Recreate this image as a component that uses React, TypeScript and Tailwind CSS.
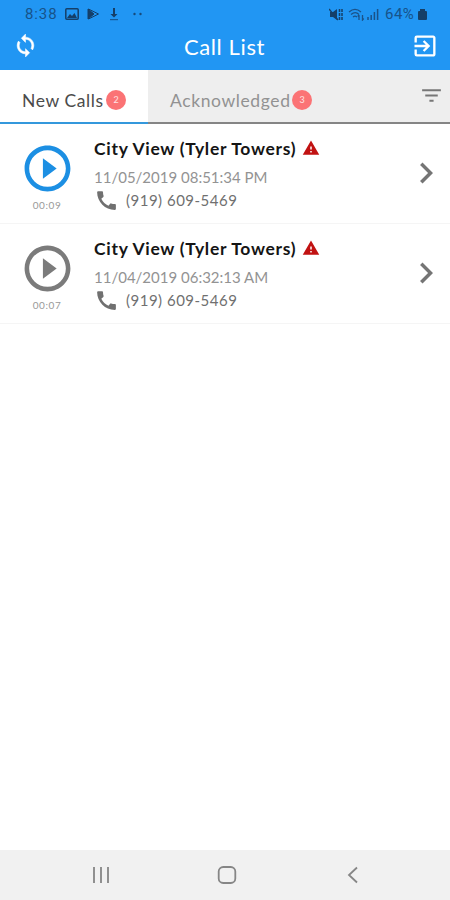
import {
  MdCall,
  MdChevronRight,
  MdExitToApp,
  MdFilterList,
  MdPlayCircleOutline,
  MdWarning,
} from "react-icons/md";

const calls = [
  { name: "City View (Tyler Towers)", date: "11/05/2019 08:51:34 PM", phone: "(919) 609-5469", length: "00:09", unread: true },
  { name: "City View (Tyler Towers)", date: "11/04/2019 06:32:13 AM", phone: "(919) 609-5469", length: "00:07", unread: false },
];

function StatusBar() {
  return (
    <div className="flex h-7 items-center justify-between pl-[25px] pr-[23px] font-['Roboto',sans-serif] text-[15px] text-[#17538a]">
      <div className="flex items-center">
        <span className="w-[33px] tracking-[0.9px]">8:38</span>
        <svg className="ml-[7px]" width="14" height="12" viewBox="0 0 14 12" fill="none" stroke="#153f68" strokeWidth="1.5">
          <rect x="0.8" y="0.8" width="12.4" height="10.4" rx="1" />
          <path d="M2 10l3-4 2 2 2.500-3L12 10z" fill="#153f68" stroke="none" />
        </svg>
        <svg className="ml-2" width="13" height="12" viewBox="0 0 13 12" fill="none" stroke="#153f68">
          <path d="M1.500 1v10L11.500 6z" />
          <path d="M1 1l6 5-6 5z" fill="#153f68" />
        </svg>
        <svg className="ml-[9px]" width="10" height="14" viewBox="0 0 10 14" fill="#153f68">
          <path d="M4 1h2v6h2.500L5 10.500 1.500 7H4z" />
          <path d="M1 12h8v1.200H1z" opacity="0.7" />
        </svg>
        <svg className="ml-[13px]" width="12" height="4" viewBox="0 0 12 4" fill="#174a7b">
          <circle cx="2.500" cy="2" r="1.200" />
          <circle cx="8.500" cy="2" r="1.200" />
        </svg>
      </div>
      <div className="flex items-center">
        <svg width="14" height="13" viewBox="0 0 14 13" fill="#153f68">
          <path d="M1 4h3l4-3v11L4 9H1z" />
          <path d="M0 1l9 11" stroke="#153f68" strokeWidth="1.300" />
          <path d="M10.500 1v11M13 1v11" stroke="#153f68" strokeWidth="1.500" strokeDasharray="3 1" />
        </svg>
        <svg className="ml-[5px]" width="17" height="13" viewBox="0 0 17 13" fill="none" stroke="#1b5288" strokeWidth="1.300">
          <path d="M1 4c4-3.500 8-3.500 12 0M3 6.500c3-2.500 5.500-2.500 8 0M5 9c1.500-1.200 2.500-1.200 4 0" />
          <path d="M11 12V7M9.800 8.500L11 7M14.500 7v5l1.200-1.500" />
        </svg>
        <svg className="ml-[2px]" width="12" height="12" viewBox="0 0 12 12" stroke="#1b5288" strokeWidth="1.500">
          <path d="M1 12V9M4.200 12V7M7.400 12V4M10.600 12V1" />
        </svg>
        <span className="ml-[6px] w-[32px] whitespace-nowrap tracking-[0.5px]">64%</span>
        <svg className="ml-px" width="9" height="11" viewBox="0 0 9 11" fill="#153f68">
          <path d="M2 0h5v2h1a1 1 0 0 1 1 1v7a1 1 0 0 1-1 1H1a1 1 0 0 1-1-1V3a1 1 0 0 1 1-1h1z" />
        </svg>
      </div>
    </div>
  );
}

function SyncIcon() {
  return (
    <svg className="mb-px size-[25px]" viewBox="0 0 24 24" fill="white" stroke="white" strokeWidth="0.500">
      <path d="M12 4V1L8 5l4 4V6c3.310 0 6 2.690 6 6 0 1.010-.25 1.970-.7 2.800l1.460 1.460C19.540 15.030 20 13.570 20 12c0-4.420-3.580-8-8-8z" />
      <path d="M12 18c-3.310 0-6-2.690-6-6 0-1.010.25-1.970.7-2.800L5.240 7.740C4.460 8.970 4 10.430 4 12c0 4.420 3.580 8 8 8v3l4-4-4-4v3z" />
    </svg>
  );
}

function Badge({ count }: { count: number }) {
  return (
    <span className="flex size-5 shrink-0 items-center justify-center rounded-full bg-[#fb7375] text-[9px] text-white/80">
      {count}
    </span>
  );
}

function CallRow({ call }: { call: (typeof calls)[number] }) {
  return (
    <div className="flex h-[100px] border-b border-[#f5f5f5]">
      <div className="flex w-[94px] flex-col items-center pt-[17px]">
        <MdPlayCircleOutline className={call.unread ? "size-[55px] text-[#1c8fe3]" : "size-[55px] text-[#7b7b7b]"} />
        <span className="mt-[3px] text-[10px] leading-3 tracking-[0.6px] text-[#999]">{call.length}</span>
      </div>
      <div className="flex-1 whitespace-nowrap pt-[14px]">
        <div className="flex h-[22px] items-center">
          <span className="w-[208px] text-[17.5px] font-bold tracking-[0.7px] text-[#151515]">{call.name}</span>
          <MdWarning className="mb-[2px] size-[18px] text-[#c11212]" />
        </div>
        <div className="mt-[6px] h-[22px] text-[15px] leading-[22px] text-[#939393]">{call.date}</div>
        <div className="flex h-[24px] items-center text-[15px] text-[#707070]">
          <MdCall className="size-[25px]" />
          <span className="ml-[7px] tracking-[0.5px]">{call.phone}</span>
        </div>
      </div>
      <MdChevronRight className="mr-[3px] mt-[28px] size-[42px] text-[#757575]" />
    </div>
  );
}

export default function App() {
  return (
    <div className="flex h-[900px] w-[450px] flex-col overflow-hidden bg-white font-['Lato',sans-serif]">
      <header className="h-[70px] bg-[#2196f3]">
        <StatusBar />
        <div className="flex h-[35px] items-center justify-between pl-[13px] pr-[11px] text-white">
          <SyncIcon />
          <h1 className="pt-[2px] text-[22px] tracking-[0.6px]">Call List</h1>
          <MdExitToApp className="size-7" />
        </div>
      </header>
      <nav className="flex h-[54px] text-[17.5px]">
        <div className="flex w-[148px] items-center border-b-2 border-[#3498dc] pl-[22px] pt-[7px] text-[#4b4b4b]">
          <span className="w-[84px] whitespace-nowrap pt-[3px] tracking-[0.6px]">New Calls</span>
          <Badge count={2} />
        </div>
        <div className="flex flex-1 items-center border-b-2 border-[#858585] bg-[#eee] pl-[22px] pt-[7px] text-[#929292]">
          <span className="w-[122px] whitespace-nowrap pt-[3px] tracking-[0.6px]">Acknowledged</span>
          <Badge count={3} />
          <MdFilterList className="mb-[9px] ml-auto mr-[6px] size-[25px] text-[#777]" />
        </div>
      </nav>
      <main className="flex-1">
        {calls.map((call) => (
          <CallRow key={call.date} call={call} />
        ))}
      </main>
      <footer className="flex h-[50px] items-center bg-[#f1f1f1] pl-[92px]">
        <svg width="18" height="18" viewBox="0 0 18 18" stroke="#868686" strokeWidth="1.800">
          <path d="M2 1v16M9 1v16M16 1v16" />
        </svg>
        <svg className="ml-[107px]" width="20" height="20" viewBox="0 0 20 20" fill="none" stroke="#868686" strokeWidth="1.800">
          <rect x="1.700" y="2" width="16.600" height="16" rx="4.500" />
        </svg>
        <svg className="ml-[110px]" width="12" height="18" viewBox="0 0 12 18" fill="none" stroke="#868686" strokeWidth="1.800">
          <path d="M10 1.500L2 9l8 7.500" />
        </svg>
      </footer>
    </div>
  );
}
